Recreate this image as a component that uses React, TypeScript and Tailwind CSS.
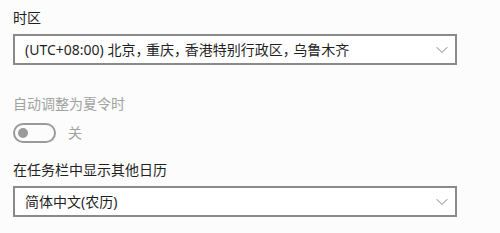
import { ChevronDown } from 'lucide-react';

const font = { fontFamily: '"Noto Sans", "Noto Sans CJK SC", sans-serif' };

function Dropdown({ value }: { value: string }) {
  return (
    <div className="flex items-center justify-between h-[31px] w-[444px] border-2 border-[#8a8a8a] bg-white pl-[10px] pr-[3px]">
      <span className="text-[14px] text-[#1f1f1f] leading-none [font-feature-settings:'halt']">{value}</span>
      <ChevronDown className="w-[20px] h-[20px] text-[#666]" strokeWidth={1} />
    </div>
  );
}

export default function App() {
  return (
    <div className="w-[500px] h-[233px] bg-[#fcfcfc] pl-[13px] pt-[9px]" style={font}>
      <div className="text-[14px] text-[#1f1f1f] leading-[18px]">时区</div>
      <div className="mt-[7px]">
        <Dropdown value="(UTC+08:00) 北京， 重庆， 香港特别行政区， 乌鲁木齐" />
      </div>

      <div className="mt-[30px] text-[14px] text-[#a2a2a2] leading-[18px]">自动调整为夏令时</div>
      <div className="mt-[10px] flex items-center gap-[12px]">
        <div className="w-[43px] h-[20px] rounded-full border-2 border-[#9a9a9a] flex items-center pl-[3px]">
          <div className="w-[10px] h-[10px] rounded-full bg-[#9a9a9a]" />
        </div>
        <span className="text-[14px] text-[#a2a2a2] leading-none">关</span>
      </div>

      <div className="mt-[18px] text-[14px] text-[#1f1f1f] leading-[18px]">在任务栏中显示其他日历</div>
      <div className="mt-[7px]">
        <Dropdown value="简体中文(农历)" />
      </div>
    </div>
  );
}
